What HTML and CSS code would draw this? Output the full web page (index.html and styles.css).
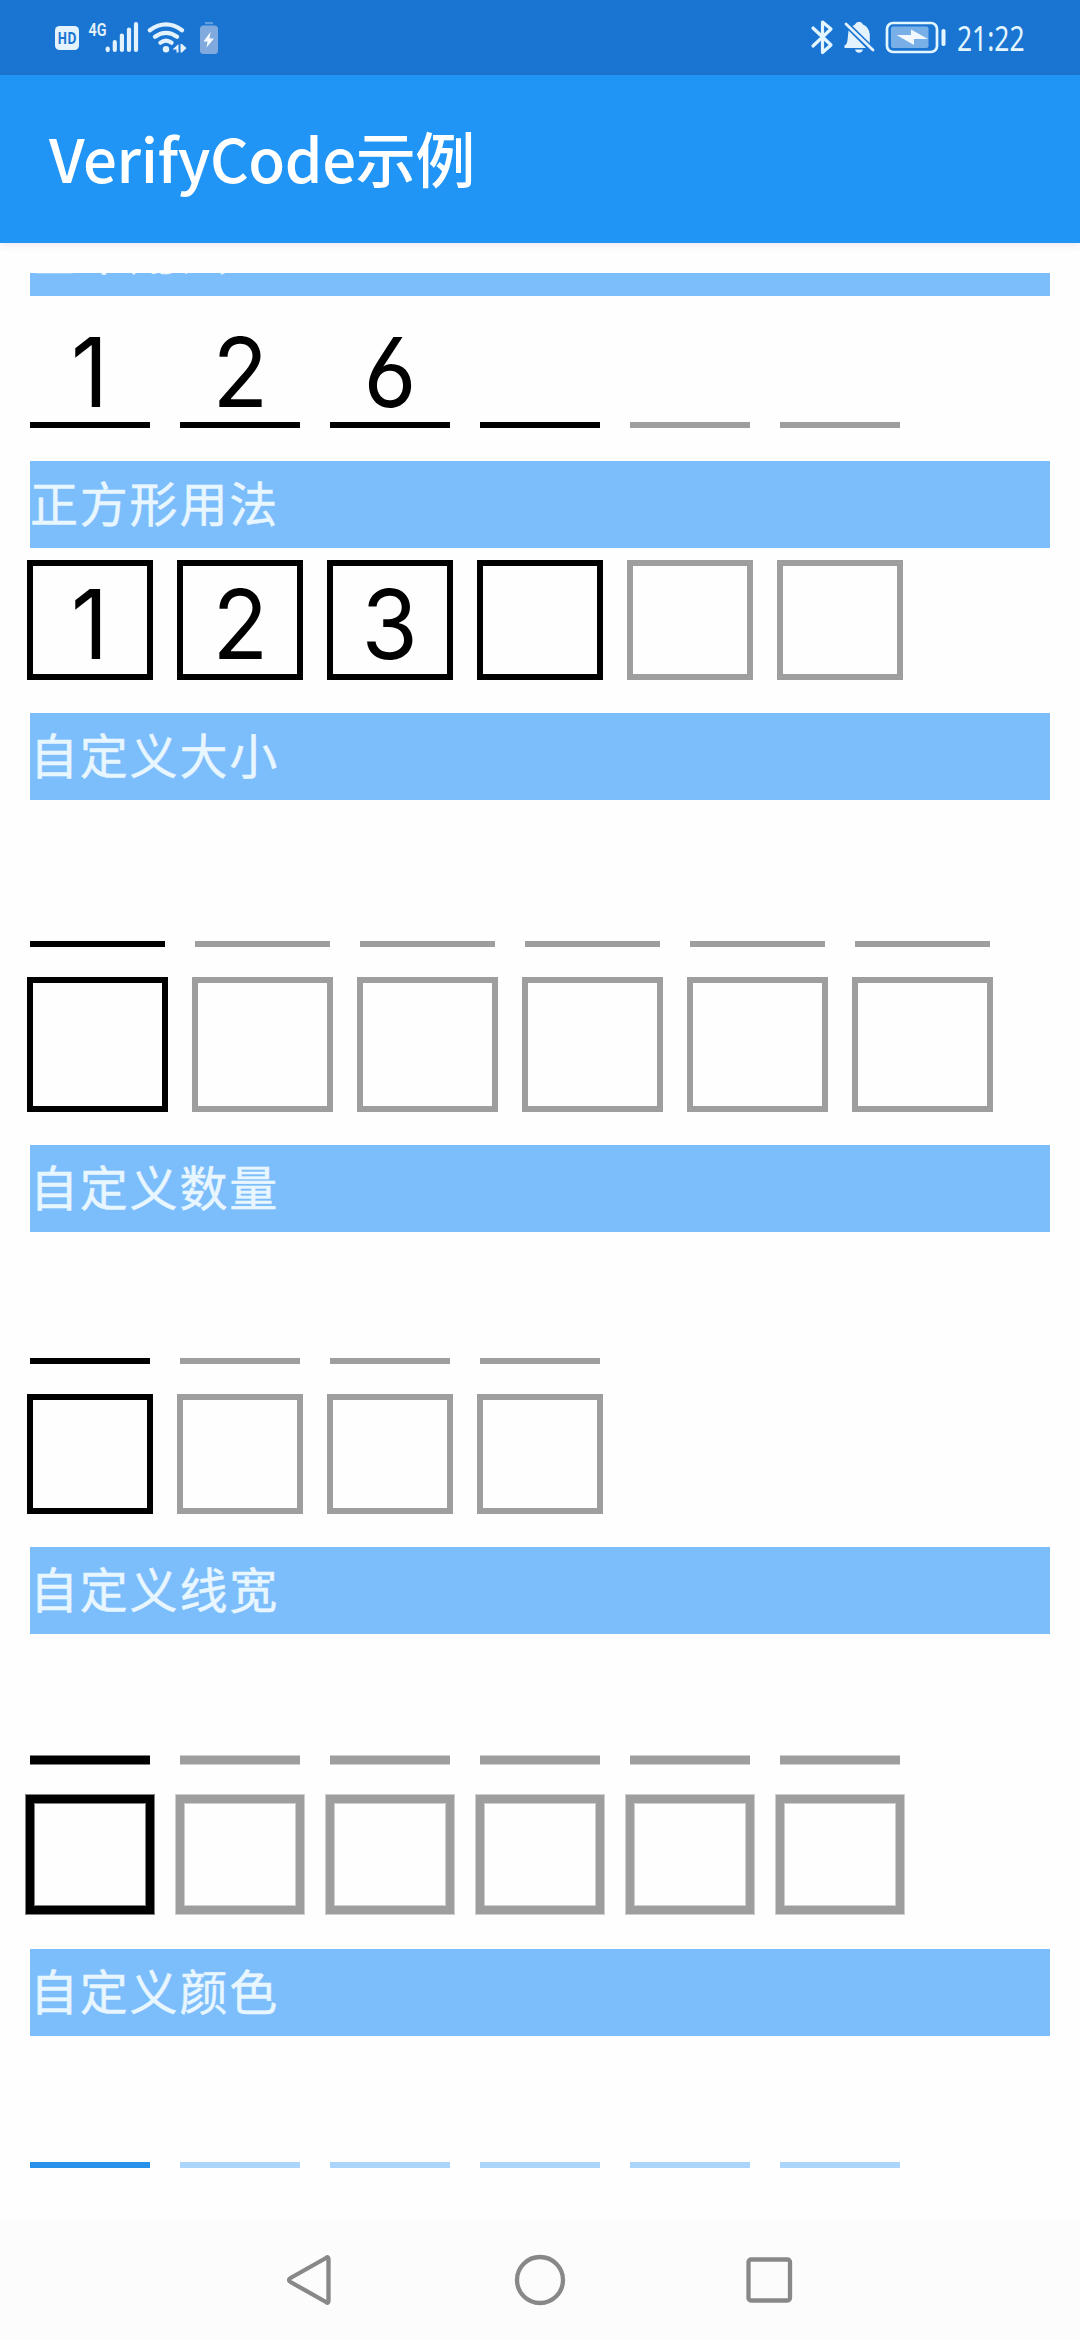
FILE: index.html
```html
<!DOCTYPE html>
<html lang="zh-CN">
<head>
<meta charset="utf-8">
<title>VerifyCode示例</title>
<link rel="stylesheet" href="styles.css">
</head>
<body>
<div class="screen">
  <header class="status">
    <svg class="status-left" width="180" height="40" viewBox="50 18 180 40">
      <rect x="55" y="26" width="24" height="24" rx="4.5" fill="#e3f2fd"/>
      <text x="57.5" y="44" class="hd" textLength="19" lengthAdjust="spacingAndGlyphs">HD</text>
      <text x="88.5" y="36" class="net" textLength="18" lengthAdjust="spacingAndGlyphs">4G</text>
      <g stroke="#e3f2fd" stroke-width="4.2" stroke-linecap="round" fill="none">
        <path d="M107.7 48.5v1.6M114.8 42v8M121.9 35.500v14.500M129 29.500v20.500M136 24v26"/>
        <path d="M149.800 30.200Q166 18.500 182 30.200M155 36.700Q166 29 177 36.700M160.500 42.700Q166 38.500 171.500 42.700"/>
      </g>
      <circle cx="166" cy="49.300" r="3.200" fill="#e3f2fd"/>
      <path d="M178.500 44v8.500h-2v-3h-4zM180.500 44h1.500l4.500 4-4.500 4.500h-1.500z" fill="#e3f2fd"/>
      <rect x="205" y="22" width="8" height="2.200" fill="#5f9fdf"/>
      <rect x="200" y="25.500" width="18" height="28.500" rx="3.500" fill="#80aade"/>
      <path d="M210.500 32l-7 9.500h4l-1 6 7.500-9h-4.500z" fill="#f4faff"/>
    </svg>
    <svg class="status-right" width="220" height="57" viewBox="808 9 220 57">
      <path d="M813 28l18 17-8.500 7.500V22l8.500 7-18 17" fill="none" stroke="#e3f6ff" stroke-width="3.200" stroke-linejoin="round" stroke-linecap="round"/>
      <path d="M855 24.500q1-2.700 4-2.700t4 2.700q6 2.500 6.800 10v8.500L852.500 26zM848.500 30.500L866 48h-21.500v-2.500q2.800-1.500 3-5zM855 49.500h8q-1 3.300-4 3.300t-4-3.300z" fill="#e3f2fd"/>
      <path d="M846 24l27 26" stroke="#e3f2fd" stroke-width="2.800" stroke-linecap="round"/>
      <rect x="887" y="23" width="50" height="29" rx="6" fill="none" stroke="#e3f6ff" stroke-width="2.700"/>
      <rect x="891" y="26.500" width="37.500" height="21.500" rx="2" fill="#78afe7"/>
      <path d="M896.500 35h14.500v-5.500l17 9.500h-14v6z" fill="#f1f8ff"/>
      <rect x="941.500" y="29" width="4" height="17" rx="1.800" fill="#e3f6ff"/>
      <text x="957" y="51" class="clock" textLength="67.500" lengthAdjust="spacingAndGlyphs">21:22</text>
    </svg>
  </header>
  <div class="appbar">VerifyCode示例</div>
  <main class="body">
    <div class="scroll">
      <section>
        <h2>基本用法</h2>
        <div class="row under"><i class="on"><b>1</b></i><i class="on"><b>2</b></i><i class="on"><b>6</b></i><i class="on"></i><i></i><i></i></div>
      </section>
      <section>
        <h2>正方形用法</h2>
        <div class="row box"><i class="on"><b>1</b></i><i class="on"><b>2</b></i><i class="on"><b>3</b></i><i class="on"></i><i></i><i></i></div>
      </section>
      <section class="large">
        <h2>自定义大小</h2>
        <div class="row under"><i class="on"></i><i></i><i></i><i></i><i></i><i></i></div>
        <div class="row box"><i class="on"></i><i></i><i></i><i></i><i></i><i></i></div>
      </section>
      <section>
        <h2>自定义数量</h2>
        <div class="row under"><i class="on"></i><i></i><i></i><i></i></div>
        <div class="row box"><i class="on"></i><i></i><i></i><i></i></div>
      </section>
      <section class="thick">
        <h2>自定义线宽</h2>
        <div class="row under"><i class="on"></i><i></i><i></i><i></i><i></i><i></i></div>
        <div class="row box"><i class="on"></i><i></i><i></i><i></i><i></i><i></i></div>
      </section>
      <section class="tinted">
        <h2>自定义颜色</h2>
        <div class="row under"><i class="on"></i><i></i><i></i><i></i><i></i><i></i></div>
      </section>
    </div>
  </main>
  <nav class="navbar">
    <svg width="54" height="54" viewBox="0 0 54 54"><path d="M43 5Q45.500 3 45.500 6.500V47.500Q45.500 51 43 49L7.500 29Q4.500 27 7.500 25z"/></svg>
    <svg width="54" height="54" viewBox="0 0 54 54"><circle cx="27" cy="27" r="23"/></svg>
    <svg width="54" height="54" viewBox="0 0 54 54"><rect x="5.500" y="6.500" width="41.500" height="41" rx="2.500"/></svg>
  </nav>
</div>
</body>
</html>
```
FILE: styles.css
```css
* { box-sizing: border-box; }
body { margin: 0; background: #fefefe; font-family: "Noto Sans CJK SC", sans-serif; }
.screen { width: 1080px; height: 2340px; display: flex; flex-direction: column; overflow: hidden; }
.status { height: 75px; flex: none; background: #1a75d2; display: flex; justify-content: space-between; align-items: flex-start; padding: 9px 52px 0 50px; }
.status-left { margin-top: 9px; }
.hd { font: bold 16.5px "Open Sans", sans-serif; fill: #1a75d2; }
.net { font: 600 19px "Roboto", sans-serif; fill: #e3f2fd; }
.clock { font: 400 35px "Noto Sans", sans-serif; fill: #e3f6ff; }
.appbar { height: 168px; flex: none; background: #2195f5; color: #fff; font-size: 60px; font-weight: 500; line-height: 164px; letter-spacing: -.45px; padding-left: 49px; box-shadow: 0 2px 8px rgba(120, 60, 70, .12); }
.body { flex: 1; min-height: 0; padding: 30px 30px 0; display: flex; }
.scroll { flex: 1; display: flex; flex-direction: column; justify-content: flex-end; overflow: hidden; margin: 0 -5px; padding: 0 5px; }
section { --line: #9e9e9e; --active: #000; --soft: #cecece; --w: 120px; flex: none; padding-bottom: 33px; }
section:last-child { padding-bottom: 53px; }
h2 { margin: 0 0 12px; height: 87px; line-height: 81px; background: #7cbdfb; color: #e8f6ff; font-size: 48px; font-weight: 400; letter-spacing: 1.8px; -webkit-text-stroke: .5px #e8f6ff; }
.row { display: flex; gap: 30px; }
.row + .row { margin-top: 30px; }
.row i { width: var(--w); height: var(--w); color: #000; font: 96px/129px "Inter", sans-serif; text-align: center; font-feature-settings: "cv03"; }
.row b { display: inline-block; font-weight: 400; transform: scaleX(.95); }
.row .on { --line: var(--active); }
.under i { border-bottom: 6px solid var(--line); }
.box { margin-left: -3px; gap: 24px; }
.box i { width: calc(var(--w) + 6px); border: 6px solid var(--line); line-height: 117px; }
.large { --w: 135px; }
.tinted { --line: #abd5fa; --active: #2891ea; }
.thick { padding-bottom: 35px; }
.thick h2 { margin-bottom: 11px; }
.thick .on { --soft: #808080; }
.thick .under i { height: 119px; border-width: 8px; box-shadow: 0 1px var(--soft); position: relative; }
.thick .under i::before { content: ""; position: absolute; left: 0; right: 0; bottom: 0; height: 1px; background: var(--soft); }
.thick .box { margin: 31px 0 0 -4px; gap: 22px; }
.thick .box i { width: 128px; height: 119px; border-width: 8px; box-shadow: 0 0 0 1px var(--soft), inset 0 0 0 1px var(--soft); }
.navbar { height: 119px; flex: none; background: #fcfcfc; display: flex; justify-content: center; gap: 176px; padding-top: 32px; }
.navbar svg { fill: none; stroke: #888; stroke-width: 4.300; stroke-linejoin: round; }
```
